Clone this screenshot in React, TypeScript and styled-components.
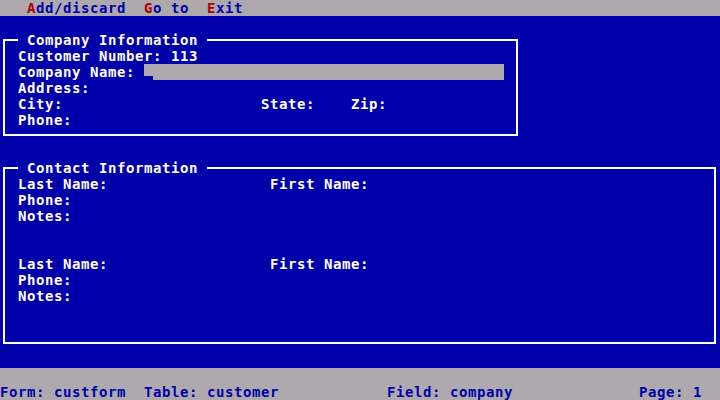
import React from "react";
import styled, { createGlobalStyle } from "styled-components";

const BLUE = "#0000aa";
const GRAY = "#ada9ad";
const RED = "#aa0000";
const WHITE = "#ffffff";

// text mode cell: 9 x 16 px, 80 x 25 screen
const CELL_W = 9;
const CELL_H = 16;

const GlobalStyle = createGlobalStyle`
  html, body {
    margin: 0;
    padding: 0;
    background: ${BLUE};
  }
  body {
    font-family: "DejaVu Sans Mono", "Liberation Mono", monospace;
    font-weight: bold;
    font-size: 14px;
    line-height: ${CELL_H}px;
    letter-spacing: 0.57px;
  }
`;

export default function App() {
  return (
    <>
      <GlobalStyle />
      <Screen>
        <MenuBar>
          <MenuItem>
            <HotKey>A</HotKey>dd/discard
          </MenuItem>
          <MenuItem>
            <HotKey>G</HotKey>o to
          </MenuItem>
          <MenuItem>
            <HotKey>E</HotKey>xit
          </MenuItem>
        </MenuBar>

        <Panel $row={2} $cols={58} $rows={7}>
          <Title $col={2}> Company Information </Title>
          <Label $col={2} $row={1}>Customer Number: 113</Label>
          <Label $col={2} $row={2}>Company Name:</Label>
          <InputField $col={16} $row={2} $width={40} />
          <Label $col={2} $row={3}>Address:</Label>
          <Label $col={2} $row={4}>City:</Label>
          <Label $col={29} $row={4}>State:</Label>
          <Label $col={39} $row={4}>Zip:</Label>
          <Label $col={2} $row={5}>Phone:</Label>
        </Panel>

        <Panel $row={10} $cols={80} $rows={12}>
          <Title $col={2}> Contact Information </Title>
          {[1, 6].map((r) => (
            <React.Fragment key={r}>
              <Label $col={2} $row={r}>Last Name:</Label>
              <Label $col={30} $row={r}>First Name:</Label>
              <Label $col={2} $row={r + 1}>Phone:</Label>
              <Label $col={2} $row={r + 2}>Notes:</Label>
            </React.Fragment>
          ))}
        </Panel>

        <StatusBar>
          <StatusItem $col={0}>Form: custform</StatusItem>
          <StatusItem $col={16}>Table: customer</StatusItem>
          <StatusItem $col={43}>Field: company</StatusItem>
          <StatusItem $col={71}>Page: 1</StatusItem>
        </StatusBar>
      </Screen>
    </>
  );
}

const Screen = styled.div`
  width: ${80 * CELL_W}px;
  height: ${25 * CELL_H}px;
  background: ${BLUE};
  display: grid;
  grid-template-columns: repeat(80, ${CELL_W}px);
  grid-template-rows: repeat(25, ${CELL_H}px);
  overflow: hidden;
`;

const MenuBar = styled.div`
  grid-column: 1 / -1;
  grid-row: 1;
  background: ${GRAY};
  color: ${BLUE};
  display: flex;
  gap: ${2 * CELL_W}px;
  padding-left: ${3 * CELL_W}px;
  white-space: pre;
`;

const MenuItem = styled.span``;

const HotKey = styled.span`
  color: ${RED};
`;

const Panel = styled.div<{ $row: number; $cols: number; $rows: number }>`
  grid-column: 1 / span ${(p) => p.$cols};
  grid-row: ${(p) => p.$row + 1} / span ${(p) => p.$rows};
  position: relative;
  display: grid;
  grid-template-columns: repeat(${(p) => p.$cols}, ${CELL_W}px);
  grid-template-rows: repeat(${(p) => p.$rows}, ${CELL_H}px);
  color: ${WHITE};

  &::before {
    content: "";
    position: absolute;
    left: 3px;
    right: 4px;
    top: 7px;
    bottom: 8px;
    border: 2px solid ${WHITE};
    pointer-events: none;
  }
`;

const Title = styled.span<{ $col: number }>`
  grid-column: ${(p) => p.$col + 1};
  grid-row: 1;
  position: relative;
  z-index: 1;
  background: ${BLUE};
  white-space: pre;
  justify-self: start;
`;

const Label = styled.span<{ $col: number; $row: number }>`
  grid-column: ${(p) => p.$col + 1};
  grid-row: ${(p) => p.$row + 1};
  white-space: pre;
`;

const InputField = styled.div<{ $col: number; $row: number; $width: number }>`
  grid-column: ${(p) => p.$col + 1} / span ${(p) => p.$width};
  grid-row: ${(p) => p.$row + 1};
  background:
    linear-gradient(to top, ${BLUE} 0 4px, transparent 4px) no-repeat 0 0 /
      ${CELL_W}px 100%,
    ${GRAY};
`;

const StatusBar = styled.div`
  grid-column: 1 / -1;
  grid-row: 24 / span 2;
  background: ${GRAY};
  color: ${BLUE};
  display: grid;
  grid-template-columns: repeat(80, ${CELL_W}px);
  grid-template-rows: repeat(2, ${CELL_H}px);
`;

const StatusItem = styled.span<{ $col: number }>`
  grid-column: ${(p) => p.$col + 1};
  grid-row: 2;
  white-space: pre;
`;
